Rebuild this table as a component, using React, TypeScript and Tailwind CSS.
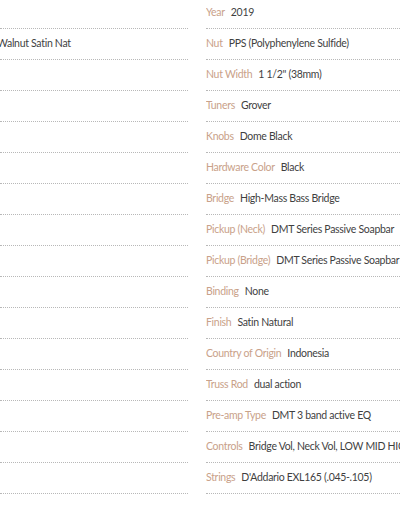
const specs = [
  { label: "Year", value: "2019" },
  { label: "Nut", value: "PPS (Polyphenylene Sulfide)" },
  { label: "Nut Width", value: "1 1/2\" (38mm)" },
  { label: "Tuners", value: "Grover" },
  { label: "Knobs", value: "Dome Black" },
  { label: "Hardware Color", value: "Black" },
  { label: "Bridge", value: "High-Mass Bass Bridge" },
  { label: "Pickup (Neck)", value: "DMT Series Passive Soapbar" },
  { label: "Pickup (Bridge)", value: "DMT Series Passive Soapbar" },
  { label: "Binding", value: "None" },
  { label: "Finish", value: "Satin Natural" },
  { label: "Country of Origin", value: "Indonesia" },
  { label: "Truss Rod", value: "dual action" },
  { label: "Pre-amp Type", value: "DMT 3 band active EQ" },
  { label: "Controls", value: "Bridge Vol, Neck Vol, LOW MID HIGH EQ" },
  { label: "Strings", value: "D'Addario EXL165 (.045-.105)" },
];

const leftRows = specs.map((_, i) => (i === 1 ? "Walnut Satin Nat" : ""));

const App = () => {
  return (
    <main className="w-[400px] h-[516px] bg-white overflow-hidden font-['Lato',sans-serif] text-[10.5px] tracking-[-0.3px]">
      <div className="flex -mt-[2px]">
        <div className="w-[188px] shrink-0 overflow-hidden">
          {leftRows.map((v, i) => (
            <div key={i} className="h-[31px] flex items-center border-b border-dotted border-[#b8b8b8]">
              <p className="-ml-[3px] whitespace-nowrap text-[#3f3f3f]">{v}</p>
            </div>
          ))}
        </div>
        <div className="ml-[18px] flex-1 min-w-0 overflow-hidden">
          {specs.map((s) => (
            <div key={s.label} className="h-[31px] flex items-center border-b border-dotted border-[#b8b8b8]">
              <p className="whitespace-nowrap">
                <span className="text-[#c9a189]">{s.label}</span>
                <span className="ml-[6px] text-[#3f3f3f]">{s.value}</span>
              </p>
            </div>
          ))}
        </div>
      </div>
    </main>
  );
};

export default App;
